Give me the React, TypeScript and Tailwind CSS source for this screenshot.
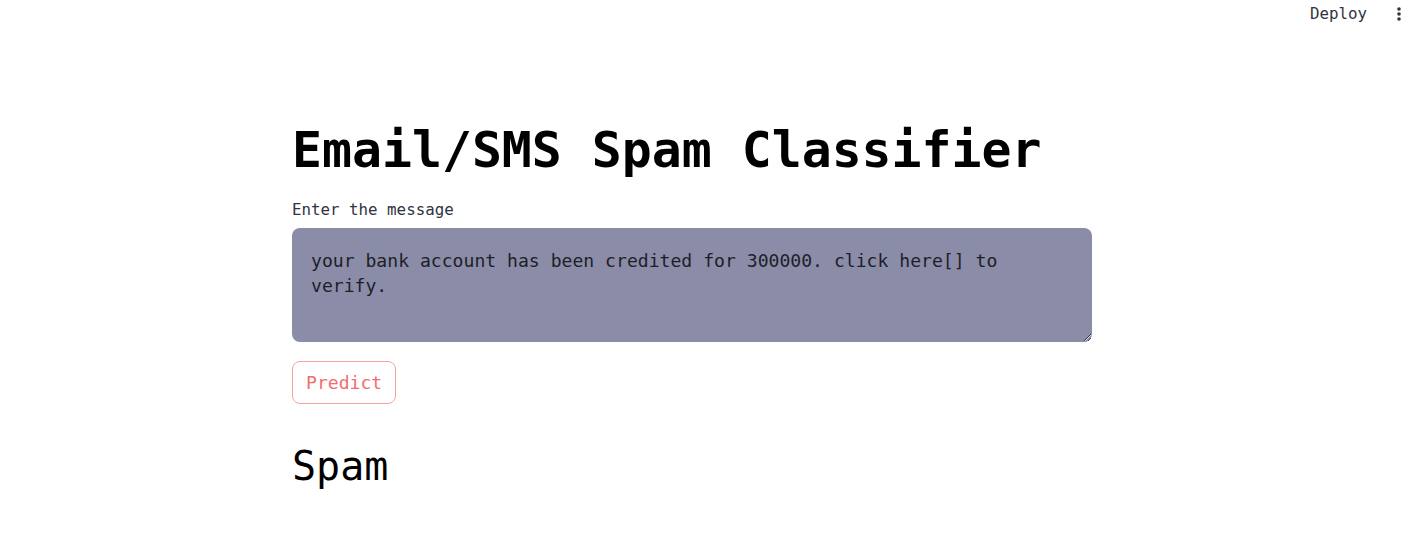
import { useState } from "react";

const mono = { fontFamily: '"DejaVu Sans Mono", "Liberation Mono", monospace' };

function Header() {
  return (
    <header className="flex h-[28px] items-center justify-end gap-[29px] pr-[12px]">
      <span className="text-[15.8px] leading-none text-[#31333f]">Deploy</span>
      <svg width="6" height="16" viewBox="0 0 6 16" className="text-[#31333f]">
        <circle cx="3" cy="3" r="1.8" fill="currentColor" />
        <circle cx="3" cy="8" r="1.8" fill="currentColor" />
        <circle cx="3" cy="13" r="1.8" fill="currentColor" />
      </svg>
    </header>
  );
}

export default function App() {
  const [msg, setMsg] = useState("your bank account has been credited for 300000. click here[] to verify.");

  return (
    <div className="min-h-[548px] bg-white" style={mono}>
      <Header />
      <main className="pl-[292px] pt-[92px]">
        <div className="flex w-[800px] flex-col">
          <h1 className="text-[49.8px] font-bold leading-[60px] text-black">Email/SMS Spam Classifier</h1>

          <label className="mt-[20px] text-[15.8px] leading-[20px] text-[#31333f]">Enter the message</label>
          <textarea
            value={msg}
            onChange={(e) => setMsg(e.target.value)}
            className="mt-[8px] h-[114px] w-[800px] resize-y rounded-[8px] bg-[#8a8ca8] px-[19px] pt-[20px] pb-[16px] text-[18.1px] leading-[25px] text-[#1e1e28] outline-none"
          />

          <div className="mt-[19px]">
            <button className="h-[43px] rounded-[8px] border border-[#f6a3a3] bg-white px-[13px] text-[18.1px] text-[#f26d6d]">
              Predict
            </button>
          </div>

          <h3 className="mt-[38px] text-[40px] leading-[48px] text-black">Spam</h3>
        </div>
      </main>
    </div>
  );
}
